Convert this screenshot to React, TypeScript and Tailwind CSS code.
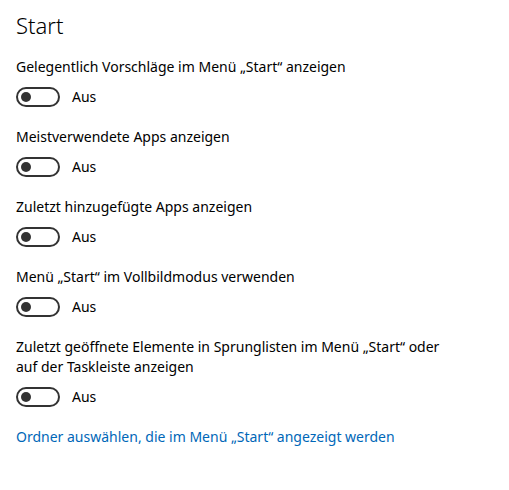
import React from "react";

const items: string[][] = [
  ["Gelegentlich Vorschläge im Menü „Start“ anzeigen"],
  ["Meistverwendete Apps anzeigen"],
  ["Zuletzt hinzugefügte Apps anzeigen"],
  ["Menü „Start“ im Vollbildmodus verwenden"],
  ["Zuletzt geöffnete Elemente in Sprunglisten im Menü „Start“ oder", "auf der Taskleiste anzeigen"],
];

function Toggle() {
  return (
    <div className="flex items-center h-5">
      <div className="w-[44px] h-5 rounded-full border-2 border-[#333333] flex items-center pl-[3px] box-border">
        <div className="w-[10px] h-[10px] rounded-full bg-[#333333]" />
      </div>
      <span className="ml-3 text-[14px] leading-5 text-black">Aus</span>
    </div>
  );
}

export default function App() {
  return (
    <div
      className="w-[509px] h-[490px] bg-white pl-4 pt-[9px] text-black"
      style={{ fontFamily: '"Noto Sans", sans-serif' }}
    >
      <h1 className="text-[22px] leading-8 font-light text-black">Start</h1>
      <div className="mt-4 flex flex-col gap-5">
        {items.map((lines, i) => (
          <div key={i} className="flex flex-col gap-[10px]">
            <div className="text-[14px] leading-5">
              {lines.map((l, j) => (
                <div key={j}>{l}</div>
              ))}
            </div>
            <Toggle />
          </div>
        ))}
        <div className="text-[14px] leading-5 text-[#0067b8]">
          Ordner auswählen, die im Menü „Start“ angezeigt werden
        </div>
      </div>
    </div>
  );
}
